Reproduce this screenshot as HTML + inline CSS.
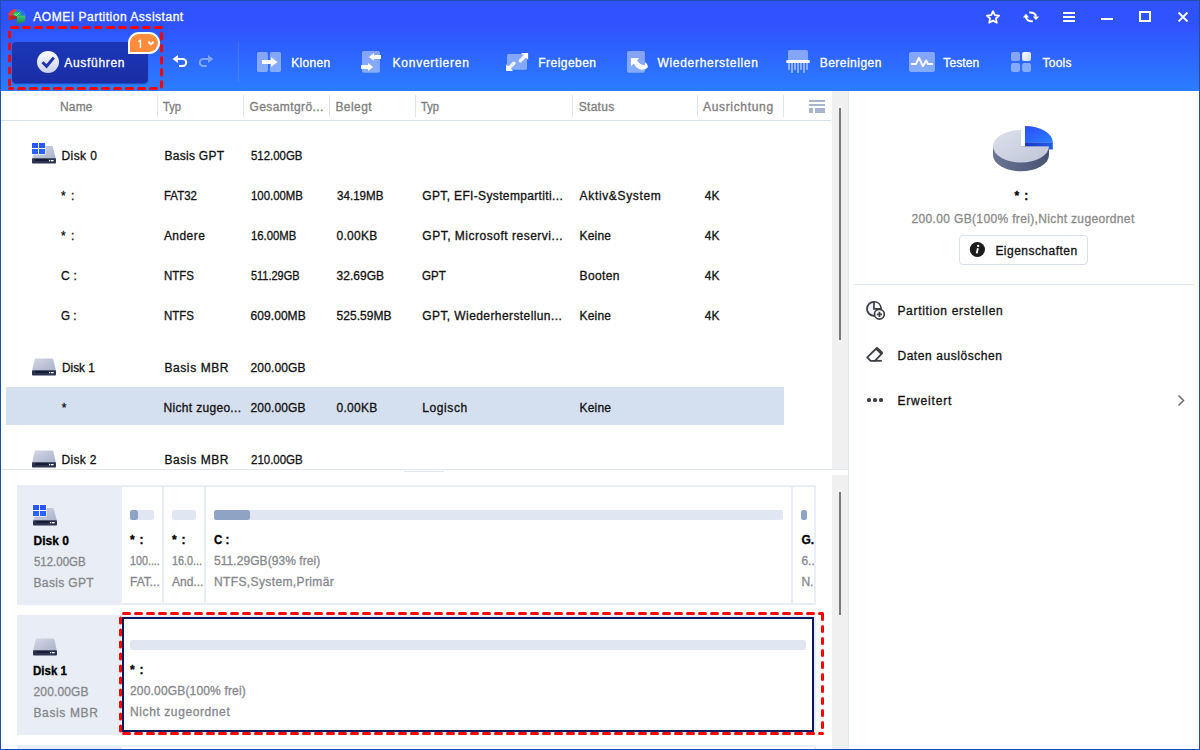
<!DOCTYPE html>
<html><head><meta charset="utf-8">
<style>
*{box-sizing:border-box;margin:0;padding:0}
html,body{width:1200px;height:750px;overflow:hidden;background:#fff}
body{font-family:"Liberation Sans",sans-serif;font-size:12px;color:#111;position:relative}
.abs{position:absolute}
.t{position:absolute;white-space:nowrap;line-height:16px;height:16px;transform-origin:0 50%;-webkit-text-stroke:.3px}
#hdr{position:absolute;left:0;top:0;width:1200px;height:91px;background:linear-gradient(#2f54ff 0,#2f54ff 28px,#2b7dff 91px)}
#hdr .t{color:#fff}
.frameL{position:absolute;left:0;top:0;width:1px;height:750px;background:#1a4fb0}
.frameT{position:absolute;left:0;top:0;width:1200px;height:1px;background:#1a4fb0}
.frameR{position:absolute;left:1199px;top:0;width:1px;height:750px;background:#1a4fb0}
.hd{color:#7b7b7b}
.g{color:#7f7f7f}
.row .t{color:#111}
</style></head><body>
<!--HEADER-->
<div id="hdr">
<!-- logo -->
<svg class="abs" style="left:7px;top:8px" width="20" height="17" viewBox="0 0 20 17"><defs><linearGradient id="lgg" x1="0" y1="0" x2="0" y2="1"><stop offset="0" stop-color="#3fcc7a"/><stop offset="1" stop-color="#1b8636"/></linearGradient><linearGradient id="lgr" x1="0" y1="0" x2="1" y2="0"><stop offset="0" stop-color="#d62a22"/><stop offset="1" stop-color="#b01f1c"/></linearGradient></defs>
<path d="M9 1.1 C14 1.1 18.9 3.4 18.9 7.3 L14 8 L9 5 Z" fill="#2878e6"/>
<path d="M1.2 7.8 C1.2 4 5 1.3 9 1.1 L9 7.8 Z" fill="#f03c3c"/>
<path d="M1.2 7.6 L9.9 7.6 L9.9 10.6 L1.5 12.7 Z" fill="url(#lgr)"/>
<path d="M10 7.8 L18.4 7.4 L18.4 12.6 C17 14.6 13 15.8 10 15.8 Z" fill="url(#lgg)"/>
<ellipse cx="10" cy="6.1" rx="4" ry="2.4" fill="#1fc95c"/>
<path d="M8 6.2 L9.6 7.4 L12.2 4.8" stroke="#eafff0" stroke-opacity=".8" stroke-width=".9" fill="none"/>
</svg>
<div class="t" style="left:33.3px;top:8.7px;color:#fff;letter-spacing:0.52px">AOMEI Partition Assistant</div>
<!-- window controls -->
<svg class="abs" style="left:984px;top:8px" width="18" height="18" viewBox="0 0 18 18"><path d="M9 3.2 L10.8 7.2 L15.1 7.6 L11.9 10.5 L12.8 14.8 L9 12.6 L5.2 14.8 L6.1 10.5 L2.9 7.6 L7.2 7.2 Z" fill="none" stroke="#fff" stroke-width="1.8" stroke-linejoin="round"/></svg>
<svg class="abs" style="left:1022px;top:8px" width="18" height="18" viewBox="0 0 18 18"><path d="M10.8 13.2 C7 13.5 4.2 12 4 9" fill="none" stroke="#fff" stroke-width="2.1"/><path d="M0.9 9.6 L4 5.7 L7 9.6 Z" fill="#fff"/><path d="M7.2 4.5 C11 4.2 13.8 5.7 14 8.6" fill="none" stroke="#fff" stroke-width="2.1"/><path d="M10.9 8.4 L14 12.2 L17.1 8.4 Z" fill="#fff"/></svg>
<div class="abs" style="left:1063px;top:12px;width:12px;height:2px;background:#fff"></div>
<div class="abs" style="left:1063px;top:16px;width:12px;height:2px;background:#fff"></div>
<div class="abs" style="left:1063px;top:20px;width:12px;height:2px;background:#fff"></div>
<div class="abs" style="left:1101px;top:18px;width:12px;height:2px;background:#fff"></div>
<div class="abs" style="left:1139px;top:11px;width:12px;height:11px;border:2px solid #fff"></div>
<svg class="abs" style="left:1177px;top:11px" width="12" height="12" viewBox="0 0 12 12"><path d="M1.5 1.5 L10.5 10.5 M10.5 1.5 L1.5 10.5" stroke="#fff" stroke-width="1.8"/></svg>
<!-- run button -->
<div class="abs" style="left:12px;top:42px;width:136px;height:41px;border-radius:4px;background:linear-gradient(#1b37b8,#1a2ea4);box-shadow:0 1px 1px rgba(10,20,120,.5)"></div>
<svg class="abs" style="left:36px;top:50px" width="24" height="24" viewBox="0 0 24 24"><defs><linearGradient id="gck" x1="0" y1="0" x2="0" y2="1"><stop offset="0" stop-color="#fff"/><stop offset="1" stop-color="#c9cfee"/></linearGradient></defs><circle cx="12" cy="12" r="11" fill="url(#gck)"/><path d="M6.5 12.2 L10.6 16.2 L17.8 7.6" fill="none" stroke="#1f33ad" stroke-width="3"/></svg>
<div class="t" style="left:64.3px;top:54.7px;color:#fff;letter-spacing:0.69px">Ausführen</div>
<!-- badge -->
<div class="abs" style="left:128px;top:32px;width:32px;height:22px;background:#fff;border-radius:11px 11px 11px 0"></div>
<div class="abs" style="left:130px;top:34px;width:28px;height:18px;background:#ff8c3c;border-radius:9px 9px 9px 0"></div>
<svg class="abs" style="left:136px;top:37px" width="8" height="13" viewBox="0 0 8 13"><path d="M2.3 4.9 L4.4 3 L4.4 11" fill="none" stroke="#fff3ea" stroke-width="1.5" stroke-linejoin="round"/></svg>
<svg class="abs" style="left:147px;top:40px" width="8" height="6" viewBox="0 0 8 6"><path d="M1.4 1.8 L4 4.3 L6.6 1.8" fill="none" stroke="#fff" stroke-width="2"/></svg>
<!-- dashed red -->
<svg class="abs" style="left:0;top:0" width="170" height="92" viewBox="0 0 170 92" fill="none" stroke="#ff0000" stroke-width="3" stroke-linecap="round"><path d="M11.5 27.5 H161.5" stroke-dasharray="6 6"/><path d="M161.5 33.5 V88" stroke-dasharray="5.6 6.4"/><path d="M156.5 88.5 H9.5" stroke-dasharray="6 6"/><path d="M9.5 32 V86" stroke-dasharray="5 7"/></svg>
<!-- undo / redo -->
<svg class="abs" style="left:172px;top:54px" width="16" height="14" viewBox="0 0 16 14"><path d="M0.5 5 L6 1 L6 9 Z" fill="#fff"/><path d="M5.5 5 L10.7 5 A3.5 3.5 0 0 1 10.7 12 L7 12" fill="none" stroke="#fff" stroke-width="2"/></svg>
<svg class="abs" style="left:198px;top:54px;opacity:.4" width="16" height="14" viewBox="0 0 16 14"><path d="M15.3 5 L10 1 L10 9 Z" fill="#fff"/><path d="M10.5 5 L5.3 5 A3.5 3.5 0 0 0 5.3 12 L8.8 12" fill="none" stroke="#fff" stroke-width="2"/></svg>
<div class="abs" style="left:238px;top:42px;width:1px;height:40px;background:rgba(255,255,255,.1)"></div>
<!-- Klonen -->
<svg class="abs" style="left:257px;top:51px" width="25" height="22" viewBox="0 0 25 22"><rect x="0" y="1.1" width="10.9" height="19.8" rx="1.6" fill="#fff" fill-opacity=".42"/><rect x="12.9" y="1.1" width="11.1" height="19.8" rx="1.6" fill="#fff" fill-opacity=".42"/><path d="M5 8.9 L14.1 8.9 L14.1 5.9 L20.4 11 L14.1 16.1 L14.1 12.9 L5 12.9 Z" fill="#fff"/></svg>
<div class="t" style="left:291.3px;top:54.7px;color:#fff;letter-spacing:0.32px">Klonen</div>
<!-- Konvertieren -->
<svg class="abs" style="left:360px;top:50px" width="22" height="24" viewBox="0 0 22 24"><rect x="2" y="1" width="17.9" height="21.8" rx="1.8" fill="#fff" fill-opacity=".42"/><path d="M21 4.9 L14 4.9 L14 3 L8.8 6.9 L14 10.8 L14 9 L21 9 Z" fill="#fff"/><path d="M1.1 15.1 L8.1 15.1 L8.1 13 L13.1 17 L8.1 21 L8.1 18.9 L1.1 18.9 Z" fill="#fff"/></svg>
<div class="t" style="left:392.6px;top:54.7px;color:#fff;letter-spacing:0.75px">Konvertieren</div>
<!-- Freigeben -->
<svg class="abs" style="left:505px;top:52px" width="24" height="20" viewBox="0 0 24 20"><rect x="2" y="2" width="20" height="15.8" rx="1.6" fill="#fff" fill-opacity=".42"/><path d="M16 1.1 L23.1 1.1 L23.1 7.8 Z" fill="#fff"/><path d="M20.4 3.8 L15.3 8.9" stroke="#fff" stroke-width="3.4" stroke-linecap="round" stroke-opacity=".88"/><path d="M1.1 12.2 L1.1 19 L8.1 19 Z" fill="#fff"/><path d="M3.8 16.3 L8.9 11.2" stroke="#fff" stroke-width="3.4" stroke-linecap="round" stroke-opacity=".88"/></svg>
<div class="t" style="left:538.3px;top:54.7px;color:#fff;letter-spacing:0.45px">Freigeben</div>
<!-- Wiederherstellen -->
<svg class="abs" style="left:626px;top:50px" width="24" height="24" viewBox="0 0 24 24"><rect x="1" y="1" width="17.9" height="21.8" rx="1.8" fill="#fff" fill-opacity=".42"/><path d="M4.9 8 L13 8 L11.2 10.8 C13 13.5 15.5 15 18.8 15.2 L19.1 11.9 C21 13.5 22 15.5 21.9 17 C20 20 15.5 20.3 12.5 18.7 C10.5 17.5 9 16 7.6 13.8 L4.9 16.2 Z" fill="#fff"/></svg>
<div class="t" style="left:657.5px;top:54.7px;color:#fff;letter-spacing:0.69px">Wiederherstellen</div>
<!-- Bereinigen -->
<svg class="abs" style="left:786px;top:49px" width="25" height="25" viewBox="0 0 25 25"><path d="M2 10.9 L2 2.6 Q2 1.1 3.5 1.1 L20.5 1.1 Q22 1.1 22 2.6 L22 10.9 Z" fill="#fff" fill-opacity=".42"/><rect x="0" y="10.9" width="24" height="3.1" rx="1.55" fill="#fff"/><g fill="#fff" fill-opacity=".46"><rect x="2" y="14" width="2" height="6.8"/><rect x="5" y="14" width="2" height="9.8"/><rect x="8" y="14" width="2" height="6.8"/><rect x="11" y="14" width="2" height="9.8"/><rect x="14" y="14" width="2" height="6.8"/><rect x="17" y="14" width="2" height="9.8"/><rect x="20" y="14" width="2" height="6.8"/></g></svg>
<div class="t" style="left:819.7px;top:54.7px;color:#fff;letter-spacing:0.48px">Bereinigen</div>
<!-- Testen -->
<svg class="abs" style="left:909px;top:51px" width="27" height="22" viewBox="0 0 27 22"><rect x="0" y="1.1" width="25.9" height="19.8" rx="2" fill="#fff" fill-opacity=".42"/><path d="M2.1 12.9 L7 12.9 L10 6.8 L13.9 15.2 L17.1 9.6 L19 12.9 L23.9 12.9" fill="none" stroke="#fff" stroke-width="2" stroke-linejoin="round"/></svg>
<div class="t" style="left:943.3px;top:54.7px;color:#fff;letter-spacing:0.12px">Testen</div>
<!-- Tools -->
<svg class="abs" style="left:1010px;top:51px" width="22" height="22" viewBox="0 0 22 22"><defs><linearGradient id="gtl" x1="0" y1="0" x2="1" y2="1"><stop offset="0" stop-color="#fff"/><stop offset="1" stop-color="#c9d8ff"/></linearGradient></defs><rect x="1" y="1.1" width="9" height="8.9" rx="2" fill="#fff" fill-opacity=".42"/><rect x="12.1" y="1.1" width="8.9" height="8.9" rx="2" fill="url(#gtl)"/><rect x="1" y="12" width="9" height="8.9" rx="2" fill="#fff" fill-opacity=".42"/><rect x="12.1" y="12" width="8.9" height="8.9" rx="2" fill="#fff" fill-opacity=".42"/></svg>
<div class="t" style="left:1042.5px;top:54.7px;color:#fff;letter-spacing:0.25px">Tools</div>
</div>

<!--TABLE-->
<div class="abs" style="left:0;top:120px;width:831px;height:1px;background:#d9e0ee"></div>
<div class="abs" style="left:157px;top:95px;width:1px;height:22px;background:#dfe5f0"></div>
<div class="abs" style="left:243px;top:95px;width:1px;height:22px;background:#dfe5f0"></div>
<div class="abs" style="left:329px;top:95px;width:1px;height:22px;background:#dfe5f0"></div>
<div class="abs" style="left:415px;top:95px;width:1px;height:22px;background:#dfe5f0"></div>
<div class="abs" style="left:572px;top:95px;width:1px;height:22px;background:#dfe5f0"></div>
<div class="abs" style="left:697px;top:95px;width:1px;height:22px;background:#dfe5f0"></div>
<div class="abs" style="left:783px;top:95px;width:1px;height:22px;background:#dfe5f0"></div>
<div class="t" style="left:60.0px;top:99.3px;color:#7d7d7d;letter-spacing:0.17px">Name</div>
<div class="t" style="left:163.0px;top:99.3px;color:#7d7d7d;transform:scaleX(0.925)">Typ</div>
<div class="t" style="left:249.5px;top:99.3px;color:#7d7d7d;letter-spacing:0.41px">Gesamtgrö...</div>
<div class="t" style="left:335.4px;top:99.3px;color:#7d7d7d;letter-spacing:0.44px">Belegt</div>
<div class="t" style="left:421.2px;top:99.3px;color:#7d7d7d;transform:scaleX(0.925)">Typ</div>
<div class="t" style="left:578.7px;top:99.3px;color:#7d7d7d;letter-spacing:0.30px">Status</div>
<div class="t" style="left:703.0px;top:99.3px;color:#7d7d7d;letter-spacing:0.67px">Ausrichtung</div>
<div class="abs" style="left:809px;top:100px;width:16px;height:2px;background:#a7b4cd"></div>
<div class="abs" style="left:809px;top:104px;width:16px;height:2px;background:#a7b4cd"></div>
<div class="abs" style="left:809px;top:108px;width:4px;height:5px;background:#a7b4cd"></div>
<div class="abs" style="left:815px;top:108px;width:10px;height:5px;background:#a7b4cd"></div>
<div class="abs" style="left:832px;top:91px;width:16px;height:378px;background:#f0f0f0"></div>
<div class="abs" style="left:848px;top:91px;width:1px;height:659px;background:#e3e9f5"></div>
<div class="abs" style="left:839px;top:108px;width:2px;height:232px;background:#7a7a7a"></div>
<div class="abs" style="left:6px;top:387px;width:778px;height:37.8px;background:#d4dff0"></div>
<svg class="abs" style="left:31px;top:142px" width="26" height="22" viewBox="0 0 26 22"><defs><linearGradient id="dg1" x1="0" y1="0" x2="1" y2="1"><stop offset="0" stop-color="#d3d8e6"/><stop offset="1" stop-color="#a9b1c8"/></linearGradient></defs><path d="M5 4 L21.5 4 L25 17 L1 17 Z" fill="url(#dg1)"/><rect x="1" y="16.3" width="24" height="5.2" rx="1" fill="#2b3350"/><rect x="4" y="17.2" width="13" height="1.5" rx=".7" fill="#11162a"/><rect x="18" y="18" width="1.3" height="1.3" fill="#fff"/><rect x="20" y="18" width="2.6" height="1.3" fill="#fff"/><rect x="0.5" y="0.5" width="14" height="12" fill="#fff"/><rect x="1" y="1" width="6" height="5" fill="#2a55ff"/><rect x="8" y="1" width="6" height="5" fill="#2a55ff"/><rect x="1" y="7" width="6" height="5" fill="#2a62ff"/><rect x="8" y="7" width="6" height="5" fill="#2a62ff"/></svg>
<svg class="abs" style="left:31px;top:357.5px" width="26" height="18" viewBox="0 0 26 18"><defs><linearGradient id="dg2" x1="0" y1="0" x2="1" y2="1"><stop offset="0" stop-color="#d3d8e6"/><stop offset="1" stop-color="#a9b1c8"/></linearGradient></defs><path d="M5.2 0.5 L20.8 0.5 Q22 0.5 22.4 1.8 L25 13 L1 13 L3.6 1.8 Q4 0.5 5.2 0.5 Z" fill="url(#dg2)"/><rect x="1" y="12.3" width="24" height="5.2" rx="1" fill="#2b3350"/><rect x="4" y="13.2" width="13" height="1.5" rx=".7" fill="#11162a"/><rect x="18" y="14" width="1.3" height="1.3" fill="#fff"/><rect x="20" y="14" width="2.6" height="1.3" fill="#fff"/></svg>
<svg class="abs" style="left:31px;top:449.5px" width="26" height="18" viewBox="0 0 26 18"><defs><linearGradient id="dg3" x1="0" y1="0" x2="1" y2="1"><stop offset="0" stop-color="#d3d8e6"/><stop offset="1" stop-color="#a9b1c8"/></linearGradient></defs><path d="M5.2 0.5 L20.8 0.5 Q22 0.5 22.4 1.8 L25 13 L1 13 L3.6 1.8 Q4 0.5 5.2 0.5 Z" fill="url(#dg3)"/><rect x="1" y="12.3" width="24" height="5.2" rx="1" fill="#2b3350"/><rect x="4" y="13.2" width="13" height="1.5" rx=".7" fill="#11162a"/><rect x="18" y="14" width="1.3" height="1.3" fill="#fff"/><rect x="20" y="14" width="2.6" height="1.3" fill="#fff"/></svg>
<div class="t" style="left:61.5px;top:147.6px;letter-spacing:0.40px">Disk 0</div>
<div class="t" style="left:164.4px;top:147.6px;letter-spacing:0.29px">Basis GPT</div>
<div class="t" style="left:250.5px;top:147.6px;transform:scaleX(0.952)">512.00GB</div>
<div class="t" style="left:61.0px;top:187.6px;letter-spacing:1.00px">* :</div>
<div class="t" style="left:163.9px;top:187.6px;transform:scaleX(0.954)">FAT32</div>
<div class="t" style="left:250.5px;top:187.6px;transform:scaleX(0.949)">100.00MB</div>
<div class="t" style="left:336.6px;top:187.6px;transform:scaleX(0.967)">34.19MB</div>
<div class="t" style="left:422.3px;top:187.6px;letter-spacing:0.35px">GPT, EFI-Systempartiti...</div>
<div class="t" style="left:579.6px;top:187.6px;letter-spacing:0.65px">Aktiv&amp;System</div>
<div class="t" style="left:704.8px;top:187.6px;letter-spacing:0.10px">4K</div>
<div class="t" style="left:61.0px;top:227.6px;letter-spacing:1.00px">* :</div>
<div class="t" style="left:163.9px;top:227.6px;letter-spacing:0.46px">Andere</div>
<div class="t" style="left:250.5px;top:227.6px;transform:scaleX(0.944)">16.00MB</div>
<div class="t" style="left:336.6px;top:227.6px;letter-spacing:0.26px">0.00KB</div>
<div class="t" style="left:422.3px;top:227.6px;letter-spacing:0.51px">GPT, Microsoft reservi...</div>
<div class="t" style="left:579.6px;top:227.6px;letter-spacing:0.17px">Keine</div>
<div class="t" style="left:704.8px;top:227.6px;letter-spacing:0.10px">4K</div>
<div class="t" style="left:61.0px;top:267.6px;letter-spacing:0.25px">C :</div>
<div class="t" style="left:163.9px;top:267.6px;transform:scaleX(0.955)">NTFS</div>
<div class="t" style="left:250.5px;top:267.6px;transform:scaleX(0.913)">511.29GB</div>
<div class="t" style="left:336.6px;top:267.6px;letter-spacing:0.02px">32.69GB</div>
<div class="t" style="left:422.3px;top:267.6px;transform:scaleX(0.960)">GPT</div>
<div class="t" style="left:579.6px;top:267.6px;letter-spacing:0.38px">Booten</div>
<div class="t" style="left:704.8px;top:267.6px;letter-spacing:0.10px">4K</div>
<div class="t" style="left:61.0px;top:307.6px;transform:scaleX(0.969)">G :</div>
<div class="t" style="left:163.9px;top:307.6px;transform:scaleX(0.955)">NTFS</div>
<div class="t" style="left:250.5px;top:307.6px;letter-spacing:0.07px">609.00MB</div>
<div class="t" style="left:336.6px;top:307.6px;letter-spacing:0.03px">525.59MB</div>
<div class="t" style="left:422.3px;top:307.6px;letter-spacing:0.41px">GPT, Wiederherstellun...</div>
<div class="t" style="left:579.6px;top:307.6px;letter-spacing:0.17px">Keine</div>
<div class="t" style="left:704.8px;top:307.6px;letter-spacing:0.10px">4K</div>
<div class="t" style="left:61.5px;top:359.6px;transform:scaleX(0.985)">Disk 1</div>
<div class="t" style="left:164.4px;top:359.6px;letter-spacing:0.60px">Basis MBR</div>
<div class="t" style="left:250.5px;top:359.6px;letter-spacing:0.14px">200.00GB</div>
<div class="t" style="left:61.7px;top:399.6px">*</div>
<div class="t" style="left:163.6px;top:399.6px;letter-spacing:0.31px">Nicht zugeo...</div>
<div class="t" style="left:250.5px;top:399.6px;letter-spacing:0.14px">200.00GB</div>
<div class="t" style="left:336.6px;top:399.6px;letter-spacing:0.26px">0.00KB</div>
<div class="t" style="left:422.3px;top:399.6px;letter-spacing:0.58px">Logisch</div>
<div class="t" style="left:579.6px;top:399.6px;letter-spacing:0.17px">Keine</div>
<div class="t" style="left:61.5px;top:451.6px;letter-spacing:0.30px">Disk 2</div>
<div class="t" style="left:164.4px;top:451.6px;letter-spacing:0.60px">Basis MBR</div>
<div class="t" style="left:250.5px;top:451.6px;transform:scaleX(0.957)">210.00GB</div>
<div class="abs" style="left:1px;top:469px;width:847px;height:281px;background:#fff"></div>
<div class="abs" style="left:1px;top:469px;width:847px;height:1px;background:#dfe6f2"></div>
<div class="abs" style="left:404px;top:471px;width:40px;height:1px;background:#dfe6f2"></div>
<!--BOTTOM-->
<div class="abs" style="left:832px;top:475px;width:16px;height:274px;background:#f0f0f0"></div>
<div class="abs" style="left:839px;top:492px;width:2px;height:123px;background:#7a7a7a"></div>
<div class="abs" style="left:17px;top:485px;width:799px;height:120px;background:#e9edf5"></div>
<div class="abs" style="left:122px;top:487px;width:40px;height:116px;background:#fff"></div>
<div class="abs" style="left:164px;top:487px;width:40px;height:116px;background:#fff"></div>
<div class="abs" style="left:206px;top:487px;width:585px;height:116px;background:#fff"></div>
<div class="abs" style="left:793px;top:487px;width:21px;height:116px;background:#fff"></div>
<div class="abs" style="left:130px;top:510px;width:24px;height:10px;border-radius:2.5px;background:#e1e7f2"></div><div class="abs" style="left:130px;top:510px;width:8px;height:10px;border-radius:2.5px;background:#8fa3c5"></div>
<div class="abs" style="left:172px;top:510px;width:24px;height:10px;border-radius:2.5px;background:#e1e7f2"></div>
<div class="abs" style="left:214px;top:510px;width:569px;height:10px;border-radius:2.5px;background:#e1e7f2"></div><div class="abs" style="left:214px;top:510px;width:36px;height:10px;border-radius:2.5px;background:#8fa3c5"></div>
<div class="abs" style="left:801px;top:510px;width:6px;height:10px;border-radius:2.5px;background:#e1e7f2"></div><div class="abs" style="left:801px;top:510px;width:6px;height:10px;border-radius:2.5px;background:#8fa3c5"></div>
<svg class="abs" style="left:32px;top:504px" width="26" height="22" viewBox="0 0 26 22"><defs><linearGradient id="dg4" x1="0" y1="0" x2="1" y2="1"><stop offset="0" stop-color="#d3d8e6"/><stop offset="1" stop-color="#a9b1c8"/></linearGradient></defs><path d="M5 4 L21.5 4 L25 17 L1 17 Z" fill="url(#dg4)"/><rect x="1" y="16.3" width="24" height="5.2" rx="1" fill="#2b3350"/><rect x="4" y="17.2" width="13" height="1.5" rx=".7" fill="#11162a"/><rect x="18" y="18" width="1.3" height="1.3" fill="#fff"/><rect x="20" y="18" width="2.6" height="1.3" fill="#fff"/><rect x="0.5" y="0.5" width="14" height="12" fill="#fff"/><rect x="1" y="1" width="6" height="5" fill="#2a55ff"/><rect x="8" y="1" width="6" height="5" fill="#2a55ff"/><rect x="1" y="7" width="6" height="5" fill="#2a62ff"/><rect x="8" y="7" width="6" height="5" fill="#2a62ff"/></svg>
<div class="t" style="left:33.6px;top:532.8px;color:#000;font-weight:bold">Disk 0</div>
<div class="t" style="left:33.5px;top:554.3px;color:#85878c;transform:scaleX(0.954)">512.00GB</div>
<div class="t" style="left:33.5px;top:575.3px;color:#85878c;letter-spacing:0.35px">Basis GPT</div>
<div class="t" style="left:130.0px;top:531.6px;color:#000;font-weight:bold;letter-spacing:0.75px">* :</div>
<div class="t" style="left:130.0px;top:553.4px;color:#85878c;transform:scaleX(0.894)">100....</div>
<div class="t" style="left:130.0px;top:574.4px;color:#85878c">FAT...</div>
<div class="t" style="left:172.0px;top:531.6px;color:#000;font-weight:bold;letter-spacing:0.75px">* :</div>
<div class="t" style="left:172.0px;top:553.4px;color:#85878c;transform:scaleX(0.897)">16.0...</div>
<div class="t" style="left:172.0px;top:574.4px;color:#85878c">And...</div>
<div class="t" style="left:214.0px;top:531.6px;color:#000;font-weight:bold;transform:scaleX(0.963)">C :</div>
<div class="t" style="left:214.0px;top:553.4px;color:#85878c;letter-spacing:0.06px">511.29GB(93% frei)</div>
<div class="t" style="left:214.0px;top:574.4px;color:#85878c;letter-spacing:0.38px">NTFS,System,Primär</div>
<div class="abs" style="left:793px;top:487px;width:21px;height:116px;overflow:hidden"><div class="t" style="left:8.4px;top:45.1px;color:#000;font-weight:bold">G..</div><div class="t" style="left:8.4px;top:66.4px;color:#85878c">6..</div><div class="t" style="left:8.4px;top:87.4px;color:#85878c">N...</div></div>
<div class="abs" style="left:17px;top:615px;width:799px;height:120px;background:#e9edf5"></div>
<div class="abs" style="left:122px;top:617px;width:692px;height:115px;background:#fff;border:2px solid #0b1a5e"></div>
<div class="abs" style="left:130px;top:640px;width:676px;height:10px;border-radius:2.5px;background:#e1e7f2"></div>
<svg class="abs" style="left:32px;top:638px" width="26" height="18" viewBox="0 0 26 18"><defs><linearGradient id="dg5" x1="0" y1="0" x2="1" y2="1"><stop offset="0" stop-color="#d3d8e6"/><stop offset="1" stop-color="#a9b1c8"/></linearGradient></defs><path d="M5.2 0.5 L20.8 0.5 Q22 0.5 22.4 1.8 L25 13 L1 13 L3.6 1.8 Q4 0.5 5.2 0.5 Z" fill="url(#dg5)"/><rect x="1" y="12.3" width="24" height="5.2" rx="1" fill="#2b3350"/><rect x="4" y="13.2" width="13" height="1.5" rx=".7" fill="#11162a"/><rect x="18" y="14" width="1.3" height="1.3" fill="#fff"/><rect x="20" y="14" width="2.6" height="1.3" fill="#fff"/></svg>
<div class="t" style="left:33.3px;top:662.8px;color:#000;font-weight:bold;transform:scaleX(0.958)">Disk 1</div>
<div class="t" style="left:33.5px;top:684.3px;color:#85878c;letter-spacing:0.14px">200.00GB</div>
<div class="t" style="left:33.5px;top:705.3px;color:#85878c;letter-spacing:0.62px">Basis MBR</div>
<div class="t" style="left:130.0px;top:662.1px;color:#000;font-weight:bold;letter-spacing:0.75px">* :</div>
<div class="t" style="left:130.0px;top:683.4px;color:#85878c;letter-spacing:0.17px">200.00GB(100% frei)</div>
<div class="t" style="left:130.0px;top:704.4px;color:#85878c;letter-spacing:0.60px">Nicht zugeordnet</div>
<svg class="abs" style="left:110px;top:605px" width="720" height="135" viewBox="110 605 720 135" fill="none" stroke="#ff0000" stroke-width="3" stroke-linecap="round"><path d="M123.5 613.5 H822.5" stroke-dasharray="6 6"/><path d="M822.5 614.5 V733" stroke-dasharray="5 7"/><path d="M123.5 733.5 H822.5" stroke-dasharray="6 6"/><path d="M120.5 618 V731.5" stroke-dasharray="5 7"/></svg>
<div class="abs" style="left:17px;top:745px;width:799px;height:5px;background:#e9edf5"></div>
<div class="abs" style="left:122px;top:747px;width:692px;height:3px;background:#fff"></div>
<!--RIGHT-->
<svg class="abs" style="left:990px;top:122px" width="66" height="54" viewBox="0 0 66 54"><defs>
<linearGradient id="pg1" x1="0" y1="0" x2="1" y2="1"><stop offset="0" stop-color="#dde1eb"/><stop offset="1" stop-color="#bfc5d8"/></linearGradient>
<linearGradient id="pg2" x1="0" y1="0" x2="1" y2="0"><stop offset="0" stop-color="#6a7594"/><stop offset="1" stop-color="#4a5272"/></linearGradient>
<linearGradient id="pg3" x1="0" y1="0" x2="1" y2="1"><stop offset="0" stop-color="#2c4bff"/><stop offset="1" stop-color="#2a80ff"/></linearGradient>
<linearGradient id="pg4" x1="0" y1="0" x2="1" y2="0"><stop offset="0" stop-color="#1a38c8"/><stop offset="1" stop-color="#1f5ee6"/></linearGradient></defs>
<path d="M3 24.3 L3 33 A28 16.3 0 0 0 59 33 L59 24.3 Z" fill="url(#pg2)"/>
<path d="M31 24.3 L31 8 A28 16.3 0 1 0 59 24.3 Z" fill="url(#pg1)"/>
<path d="M35 20.2 L62.8 20.2 L62.8 27.6 L59 27.6 L59 24.3 L35 24.3 Z" fill="url(#pg4)"/>
<path d="M35 20.2 L35 4 A28 16.3 0 0 1 62.8 20.2 Z" fill="url(#pg3)"/>
</svg>
<div class="t" style="left:1014.6px;top:187.8px;color:#000;font-weight:bold;letter-spacing:0.80px">* :</div>
<div class="t" style="left:911.5px;top:210.7px;color:#8a8a8a;letter-spacing:0.35px">200.00 GB(100% frei),Nicht zugeordnet</div>
<div class="abs" style="left:959px;top:235px;width:129px;height:30px;border:1px solid #d9dfec;border-radius:4px;background:#fff"></div>
<svg class="abs" style="left:969px;top:241px" width="17" height="17" viewBox="0 0 17 17"><circle cx="8.4" cy="8.5" r="7.6" fill="#1c1c1c"/><circle cx="9.1" cy="4.9" r="1.15" fill="#fff"/><path d="M8.9 7.2 L7.7 12.4" stroke="#fff" stroke-width="1.9" stroke-linecap="butt"/></svg>
<div class="t" style="left:995.4px;top:243.2px;letter-spacing:0.47px">Eigenschaften</div>
<div class="abs" style="left:853px;top:284px;width:341px;height:1px;background:#dfe6f2"></div>
<svg class="abs" style="left:865px;top:299px" width="22" height="22" viewBox="0 0 22 22"><circle cx="9" cy="9.8" r="7" fill="#f1f3fa" stroke="#3c3f45" stroke-width="1.8"/><path d="M9 2.6 L9 9.8 L16 9.8" fill="none" stroke="#3c3f45" stroke-width="1.8"/><path d="M9.9 3.5 L9.9 8.9 L15.2 8.9 A6.2 6.2 0 0 0 9.9 3.5 Z" fill="#fff"/><circle cx="14.4" cy="15.3" r="4.9" fill="#fff" stroke="#3c3f45" stroke-width="1.7"/><path d="M14.4 12.7 L14.4 17.9 M11.8 15.3 L17 15.3" stroke="#3c3f45" stroke-width="1.8"/></svg>
<div class="t" style="left:897.4px;top:302.6px;letter-spacing:0.70px">Partition erstellen</div>
<svg class="abs" style="left:865px;top:346px" width="20" height="18" viewBox="0 0 20 18"><path d="M11.8 2 L17.2 7.1 L10 14.8 L5.6 14.8 L2.2 11.4 Z" fill="none" stroke="#3c3f45" stroke-width="1.8" stroke-linejoin="round"/><path d="M11.6 2.4 L16.8 7.4" stroke="#3c3f45" stroke-width="3.2"/><path d="M9 14.8 L16.8 14.8" stroke="#3c3f45" stroke-width="1.8"/></svg>
<div class="t" style="left:897.4px;top:347.6px;letter-spacing:0.57px">Daten auslöschen</div>
<div class="abs" style="left:867.2px;top:398.2px;width:3.7px;height:3.7px;border-radius:50%;background:#3c3f45"></div>
<div class="abs" style="left:873.2px;top:398.2px;width:3.7px;height:3.7px;border-radius:50%;background:#3c3f45"></div>
<div class="abs" style="left:879.2px;top:398.2px;width:3.7px;height:3.7px;border-radius:50%;background:#3c3f45"></div>
<div class="t" style="left:897.4px;top:392.6px;letter-spacing:0.83px">Erweitert</div>
<svg class="abs" style="left:1176px;top:394px" width="10" height="13" viewBox="0 0 10 13"><path d="M2.5 1.5 L7.5 6.5 L2.5 11.5" fill="none" stroke="#6a6a6a" stroke-width="1.5"/></svg>
<div class="abs" style="left:0;top:749px;width:1200px;height:1px;background:#1450b4"></div>
<div class="frameL"></div><div class="frameT"></div><div class="frameR"></div>
</body></html>
